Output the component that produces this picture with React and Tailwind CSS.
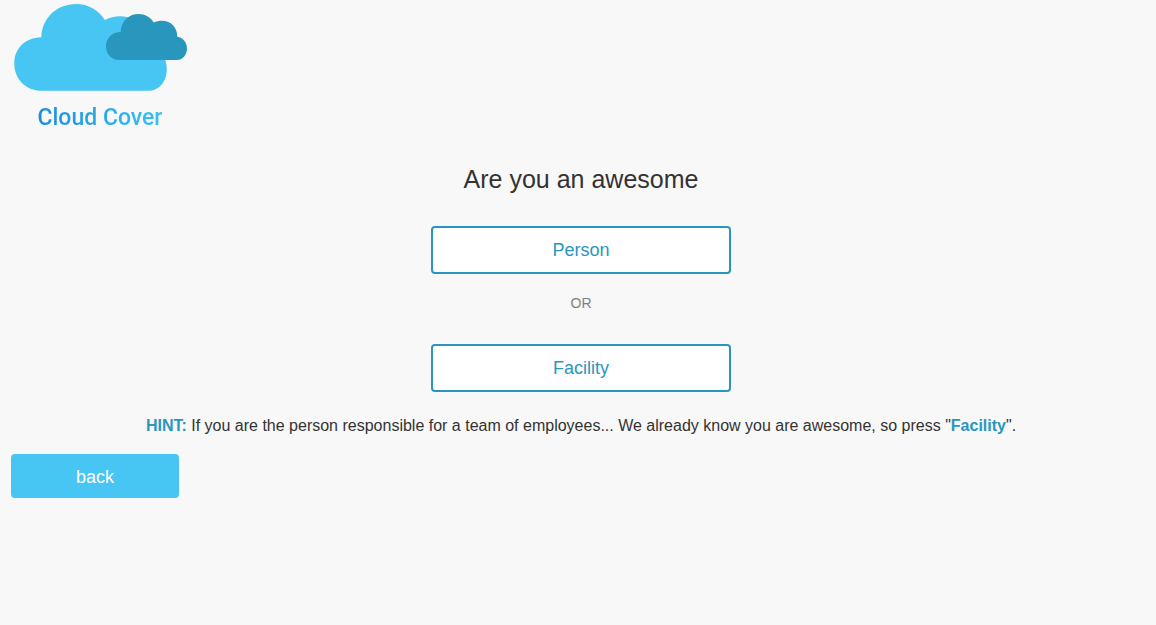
function Logo() {
  return (
    <div className="flex w-[178px] flex-col items-center">
      <svg viewBox="0 0 178 88" className="h-[88px] w-[178px]" aria-hidden="true">
        <path
          fill="#47c5f3"
          d="M30.3 33.2C31 14 45.5 .1 65.5 .1C77 .1 87.5 6 93.8 16C99 13.4 103.5 12.3 109 12.3C128 12.3 143 26 145.5 45C152 49 155.8 56 155.8 65C155.8 78 148 86.8 137 86.8H31C14 86.8 3.3 74.5 3.3 59.5C3.3 44.5 14 33.6 30.3 33.2Z"
        />
        <path
          fill="#2996be"
          d="M109.7 28C110 17.5 117.5 10.1 127.5 10.1C134 10.1 139.5 13.2 142.7 18.5C145.5 17.3 148 16.8 151 16.8C160 16.8 166.3 23.5 166.3 32.7C172 33.5 176 38.5 176 44.3C176 51 171.5 56.1 166 56.1H108.5C100.5 56.1 95 50 95 42.3C95 34 101.5 28 109.7 28Z"
        />
      </svg>
      <div className="mt-3 bg-linear-to-r from-[#1c8ddb] to-[#36c2f1] bg-clip-text font-[Roboto,sans-serif] text-[23px] leading-[28px] font-medium text-transparent">
        Cloud Cover
      </div>
    </div>
  );
}

function ChoiceButton({ children }) {
  return (
    <button
      type="button"
      className="h-12 w-full max-w-[300px] rounded border-2 border-[#2996be] bg-white text-lg text-[#2996be]"
    >
      {children}
    </button>
  );
}

export default function App() {
  return (
    <main className="min-h-screen bg-[#f8f8f8] pt-1 pr-[5px] pl-[11px] font-['Liberation_Sans',Arial,sans-serif] text-[#333]">
      <Logo />
      <section className="mt-8 flex flex-col items-center text-center">
        <h1 className="text-[25px] leading-[30px]">Are you an awesome</h1>
        <div className="mt-8 flex w-full flex-col items-center">
          <ChoiceButton>Person</ChoiceButton>
          <p className="mt-[19px] mb-[31px] text-sm text-[#808080]">OR</p>
          <ChoiceButton>Facility</ChoiceButton>
        </div>
        <p className="mt-[22px] text-base">
          <strong className="text-[#2996be]">HINT:</strong> If you are the person responsible for a team of
          employees... We already know you are awesome, so press "
          <strong className="text-[#2996be]">Facility</strong>".
        </p>
      </section>
      <button type="button" className="mt-4 h-11 w-[168px] rounded bg-[#47c5f3] pt-0.5 text-lg text-white">
        back
      </button>
    </main>
  );
}
